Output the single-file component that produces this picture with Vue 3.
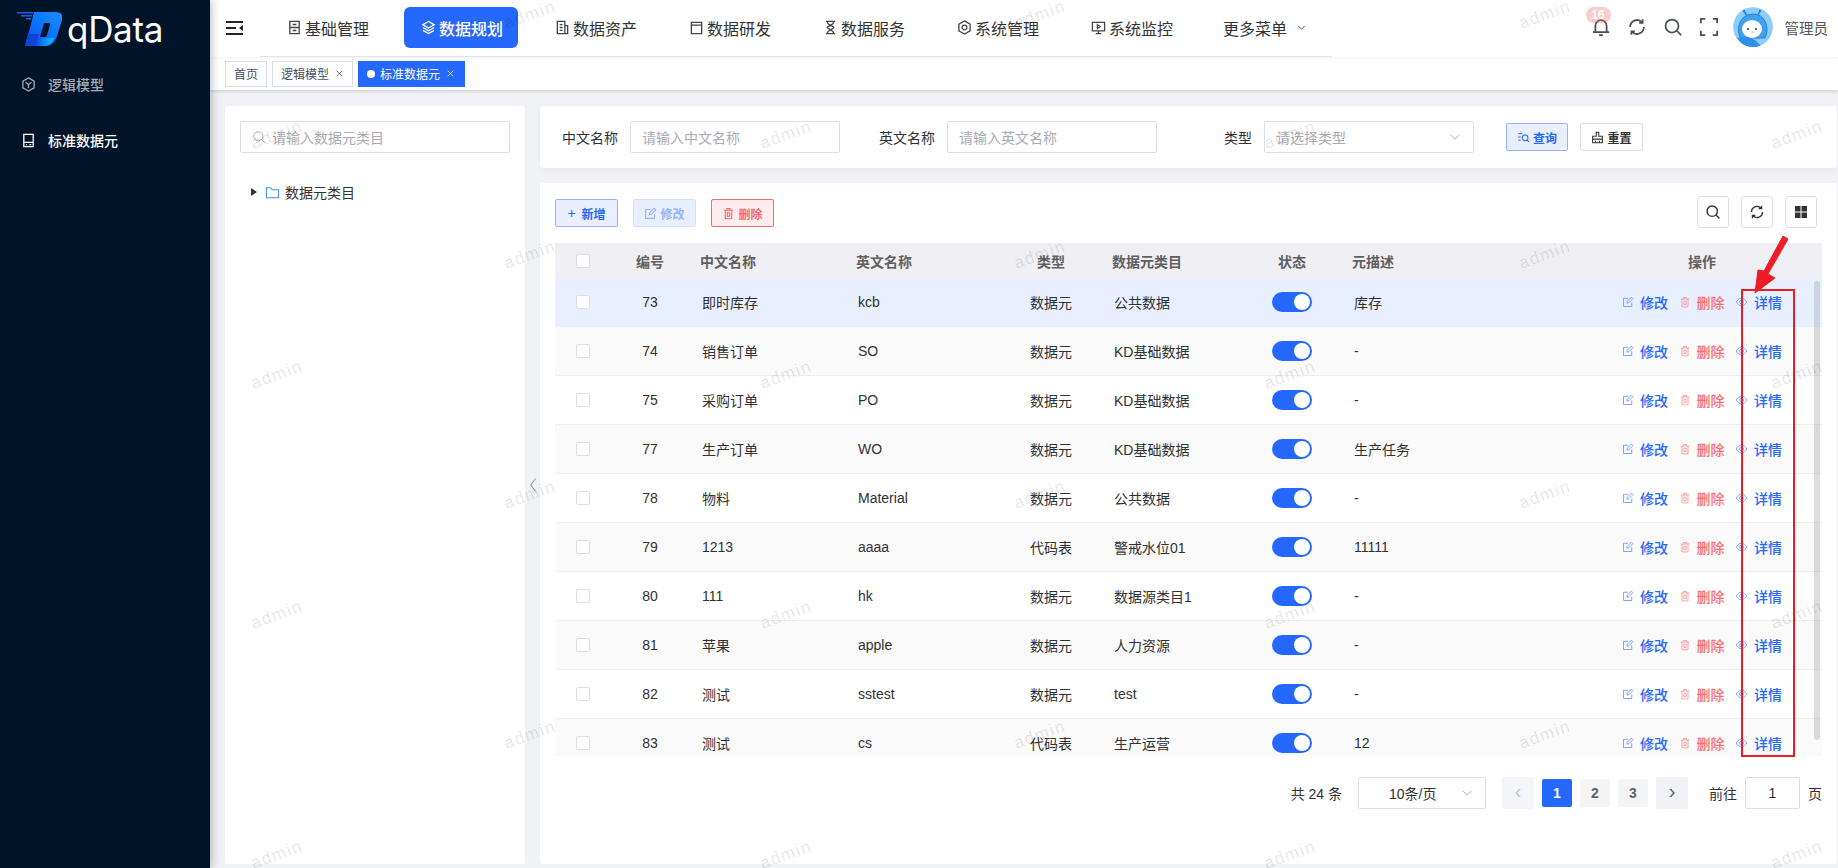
<script setup>
import { computed } from 'vue'

const icons = {
  base: 'M3 1.500h10v13H3zM3 8h10M6 4.800h4M6 11.200h4',
  layers: 'M8 1.500 14 5 8 8.500 2 5zM2 8l6 3.500L14 8M2 11l6 3.500 6-3.500',
  asset: 'M2.500 1.500h8v13h-8zM10.500 6h3v8.500h-3M5 5h3M5 8h3M5 11h3',
  dev: 'M2.500 2.500h11v12h-11zM2.500 2.500h11v3h-11z',
  hourglass: 'M3 1.500h10M3 14.500h10M4.500 1.500c0 4 7 5 7 6.500s-7 2.500-7 6.500M11.500 1.500c0 4-7 5-7 6.500s7 2.500 7 6.500',
  system: 'M8 1 14 4.500v7L8 15l-6-3.500v-7zM8 5.500a2.500 2.500 0 1 0 0 5 2.500 2.500 0 0 0 0-5z',
  monitor: 'M1.500 2.500h13v9h-13zM8 11.500v3M5 14.500h6M6.800 5l3 2-3 2z',
  cube: 'M8 1 14 4.500v7L8 15l-6-3.500v-7zM4.800 5.500 8 8l3.200-2.500M8 8v4',
  disk: 'M3 1.500h10v13H3zM3 10h10M5.500 12.300h1M9 12.300h2',
  search: 'M7.200 2a5.200 5.200 0 1 0 0 10.400A5.200 5.200 0 0 0 7.200 2zM11 11l3.500 3.500',
  refresh: 'M2.500 8a5.500 5.500 0 0 1 9.500-3.800M13.500 8A5.500 5.500 0 0 1 4 11.800M12.500 1.800v2.800H9.700M3.500 14.200v-2.800h2.800',
  edit: 'M13 8.500v5.500H2V3h6M6.500 9.500l.5-2.500 5.500-5.500 2 2L9 9z',
  trash: 'M2.500 4h11M6 4V2h4v2M4 4v10.500h8V4M6.500 7v4.500h3V7z',
  eye: 'M1 8c2-3.500 4.500-5 7-5s5 1.500 7 5c-2 3.500-4.500 5-7 5s-5-1.500-7-5zM8 5.500a2.500 2.500 0 1 0 0 5 2.500 2.500 0 0 0 0-5z',
  query: 'M1.500 3.500h5M1.500 7.500h3M1.500 11.500h3M10 5a3.500 3.500 0 1 0 0 7 3.500 3.500 0 0 0 0-7zM12.500 11l2 2.500',
  brush: 'M6.500 1.500h3v5h4.500v8H2v-8h4.500zM2 10h12M5.500 14.500V12M10.500 14.500V12',
  folder: 'M1.500 3h4.500l1.500 2h7v8.500h-13z',
  chevron: 'M3 5.500 8 10.500 13 5.500',
  bell: 'M3.500 12V7a4.500 4.500 0 0 1 9 0v5M1.500 12h13M6.500 14.500h3',
  full: 'M1.500 5V1.500H5M11 1.500h3.500V5M14.500 11v3.500H11M5 14.500H1.500V11',
  close: 'M3 3l10 10M13 3 3 13',
}

const navItems = [
  { label: '基础管理', icon: 'base' },
  { label: '数据规划', icon: 'layers', active: true },
  { label: '数据资产', icon: 'asset' },
  { label: '数据研发', icon: 'dev' },
  { label: '数据服务', icon: 'hourglass' },
  { label: '系统管理', icon: 'system' },
  { label: '系统监控', icon: 'monitor' },
]

const rows = [
  { id: 73, cn: '即时库存', en: 'kcb', type: '数据元', cat: '公共数据', desc: '库存' },
  { id: 74, cn: '销售订单', en: 'SO', type: '数据元', cat: 'KD基础数据', desc: '-' },
  { id: 75, cn: '采购订单', en: 'PO', type: '数据元', cat: 'KD基础数据', desc: '-' },
  { id: 77, cn: '生产订单', en: 'WO', type: '数据元', cat: 'KD基础数据', desc: '生产任务' },
  { id: 78, cn: '物料', en: 'Material', type: '数据元', cat: '公共数据', desc: '-' },
  { id: 79, cn: '1213', en: 'aaaa', type: '代码表', cat: '警戒水位01', desc: '11111' },
  { id: 80, cn: '111', en: 'hk', type: '数据元', cat: '数据源类目1', desc: '-' },
  { id: 81, cn: '苹果', en: 'apple', type: '数据元', cat: '人力资源', desc: '-' },
  { id: 82, cn: '测试', en: 'sstest', type: '数据元', cat: 'test', desc: '-' },
  { id: 83, cn: '测试', en: 'cs', type: '代码表', cat: '生产运营', desc: '12' },
]

// watermark repeats on a staggered grid
const marks = computed(() => {
  const list = []
  for (let r = 0; r < 8; r++) {
    const xs = r % 2 === 0 ? [530, 1040, 1545] : [277, 786, 1290, 1797]
    xs.forEach((x) => list.push({ x, y: 15 + r * 120 }))
  }
  return list
})
</script>

<template>
  <div class="page">
    <aside class="side">
      <div class="logo">
        <svg class="logo__mark" viewBox="0 0 45 34">
          <defs>
            <linearGradient id="dGrad" x1="0" y1="1" x2="1" y2="0">
              <stop offset="0" stop-color="#1046e8" />
              <stop offset="0.55" stop-color="#0a78ff" />
              <stop offset="1" stop-color="#1f8cff" />
            </linearGradient>
            <linearGradient id="dLow" x1="0" y1="0" x2="1" y2="0">
              <stop offset="0" stop-color="#0a6cf5" />
              <stop offset="1" stop-color="#12c0ff" />
            </linearGradient>
          </defs>
          <path d="M0 0h16v1.500H0zM4 3h11v1.500H4zM9 6h5v1.500H9z" fill="#1a5fe8" />
          <path fill-rule="evenodd" d="M17 0h21q9 0 7 8l-5 16q-3 10-12 10H8L14 12zM27 11l-4 14h5q1.500 0 2-2l3-10q.5-2-1.500-2z" fill="url(#dGrad)" />
          <path d="M11 22h11l-3 12H8z" fill="#0c45d8" />
          <path d="M24 26h13q-3 8-9 8h-6z" fill="url(#dLow)" />
        </svg>
        <span class="logo__text">qData</span>
      </div>
      <div class="menu">
        <svg class="ico ico--menu" viewBox="0 0 16 16"><path :d="icons.cube" /></svg>
        <span>逻辑模型</span>
      </div>
      <div class="menu menu--on">
        <svg class="ico ico--menu" viewBox="0 0 16 16"><path :d="icons.disk" /></svg>
        <span>标准数据元</span>
      </div>
    </aside>

    <div class="main">
      <header class="head">
        <svg class="burger" viewBox="0 0 17 14">
          <path d="M0 1h17M0 7h10M0 13h17" stroke="#222" stroke-width="2" fill="none" />
          <path d="M17 4v6l-4-3z" fill="#222" />
        </svg>
        <nav class="nav">
          <a v-for="n in navItems" :key="n.label" class="nav__item" :class="{ 'nav__item--on': n.active }">
            <svg class="ico" viewBox="0 0 16 16"><path :d="icons[n.icon]" /></svg>
            {{ n.label }}
          </a>
          <a class="nav__item nav__item--more">
            更多菜单
            <svg class="ico ico--more" viewBox="0 0 16 16"><path :d="icons.chevron" /></svg>
          </a>
        </nav>
        <div class="tools">
          <span class="bell">
            <svg class="tool" viewBox="0 0 16 16"><path :d="icons.bell" /></svg>
            <i class="bell__badge">16</i>
          </span>
          <svg class="tool" viewBox="0 0 16 16"><path :d="icons.refresh" /></svg>
          <svg class="tool" viewBox="0 0 16 16"><path :d="icons.search" /></svg>
          <svg class="tool" viewBox="0 0 16 16"><path :d="icons.full" /></svg>
          <svg class="avatar" viewBox="0 0 40 40">
            <circle cx="20" cy="20" r="20" fill="#8accfb" />
            <path d="M14 9 11 4M25 8l2-4" stroke="#2c7fd6" stroke-width="1.500" />
            <circle cx="11" cy="4" r="1.200" fill="#2c7fd6" />
            <circle cx="27" cy="4" r="1.200" fill="#2c7fd6" />
            <path d="M7 31q-4-13 3-20 4-4 10-4 8 0 12 7 4 9 0 17z" fill="#3f9ff0" stroke="#2c7fd6" />
            <ellipse cx="19" cy="22" rx="10" ry="9" fill="#fff" />
            <circle cx="15" cy="22" r="1" fill="#234" />
            <circle cx="23" cy="22" r="1" fill="#234" />
            <path d="M18.500 25h2" stroke="#e88" />
            <path d="M4 31l10-1 8 3 7 7H12z" fill="#2d8fe8" />
          </svg>
          <span class="user">管理员</span>
        </div>
      </header>

      <div class="tabs">
        <span class="tab">首页</span>
        <span class="tab">逻辑模型<svg class="tab__x" viewBox="0 0 16 16"><path :d="icons.close" /></svg></span>
        <span class="tab tab--on"><i class="tab__dot"></i>标准数据元<svg class="tab__x" viewBox="0 0 16 16"><path :d="icons.close" /></svg></span>
      </div>

      <div class="body">
        <section class="tree">
          <div class="field field--tree">
            <svg class="ico ico--field" viewBox="0 0 16 16"><path :d="icons.search" /></svg>
            <span class="ph">请输入数据元类目</span>
          </div>
          <div class="tree__row">
            <i class="caret"></i>
            <svg class="folder" viewBox="0 0 16 16"><path :d="icons.folder" /></svg>
            <span>数据元类目</span>
          </div>
          <svg class="collapse" viewBox="0 0 6 14"><path d="M5.500 .5 .8 7l4.700 6.500" /></svg>
        </section>

        <div class="right">
          <section class="filters">
            <label class="lbl">中文名称</label>
            <div class="field"><span class="ph">请输入中文名称</span></div>
            <label class="lbl lbl--2">英文名称</label>
            <div class="field"><span class="ph">请输入英文名称</span></div>
            <label class="lbl lbl--3">类型</label>
            <div class="field field--select">
              <span class="ph">请选择类型</span>
              <svg class="ico ico--field" viewBox="0 0 16 16"><path :d="icons.chevron" /></svg>
            </div>
            <button class="btn btn--primary btn--query">
              <svg class="ico" viewBox="0 0 16 16"><path :d="icons.query" /></svg>查询
            </button>
            <button class="btn btn--plain">
              <svg class="ico" viewBox="0 0 16 16"><path :d="icons.brush" /></svg>重置
            </button>
          </section>

          <section class="card">
            <div class="bar">
              <button class="btn btn--primary"><span class="plus">+</span>新增</button>
              <button class="btn btn--disabled">
                <svg class="ico" viewBox="0 0 16 16"><path :d="icons.edit" /></svg>修改
              </button>
              <button class="btn btn--danger">
                <svg class="ico" viewBox="0 0 16 16"><path :d="icons.trash" /></svg>删除
              </button>
              <div class="bar__right">
                <span class="square"><svg class="ico" viewBox="0 0 16 16"><path :d="icons.search" /></svg></span>
                <span class="square"><svg class="ico" viewBox="0 0 16 16"><path :d="icons.refresh" /></svg></span>
                <span class="square">
                  <svg class="ico ico--fill" viewBox="0 0 16 16"><path d="M2 2h5.500v5.500H2zM8.500 2H14v5.500H8.500zM2 8.500h5.500V14H2zM8.500 8.500H14V14H8.500z" /></svg>
                </span>
              </div>
            </div>

            <div class="table">
              <div class="row row--head">
                <div class="cell cell--c cell--check"><i class="check"></i></div>
                <div class="cell cell--c">编号</div>
                <div class="cell">中文名称</div>
                <div class="cell">英文名称</div>
                <div class="cell cell--c">类型</div>
                <div class="cell">数据元类目</div>
                <div class="cell cell--c">状态</div>
                <div class="cell">元描述</div>
                <div class="cell cell--c">操作</div>
              </div>
              <div class="rows">
                <div v-for="(r, i) in rows" :key="r.id" class="row" :class="{ 'row--on': i === 0, 'row--alt': i > 0 && i % 2 === 1 }">
                  <div class="cell cell--c cell--check"><i class="check"></i></div>
                  <div class="cell cell--c">{{ r.id }}</div>
                  <div class="cell cell--b">{{ r.cn }}</div>
                  <div class="cell cell--b">{{ r.en }}</div>
                  <div class="cell cell--c">{{ r.type }}</div>
                  <div class="cell cell--b">{{ r.cat }}</div>
                  <div class="cell cell--c"><span class="switch"><i></i></span></div>
                  <div class="cell cell--b">{{ r.desc }}</div>
                  <div class="cell ops">
                    <a class="op"><svg class="ico" viewBox="0 0 16 16"><path :d="icons.edit" /></svg>修改</a>
                    <a class="op op--del"><svg class="ico" viewBox="0 0 16 16"><path :d="icons.trash" /></svg>删除</a>
                    <a class="op"><svg class="ico ico--eye" viewBox="0 0 16 16"><path :d="icons.eye" /></svg>详情</a>
                  </div>
                </div>
              </div>
              <span class="thumb"></span>
            </div>

            <div class="pager">
              <span>共 24 条</span>
              <div class="field field--size">
                <span>10条/页</span>
                <svg class="ico ico--field" viewBox="0 0 16 16"><path :d="icons.chevron" /></svg>
              </div>
              <div class="pager__nums">
                <span class="pg pg--arrow pg--off">‹</span>
                <span class="pg pg--on">1</span>
                <span class="pg">2</span>
                <span class="pg">3</span>
                <span class="pg pg--arrow">›</span>
              </div>
              <span class="pager__go">前往</span>
              <div class="field field--jump">1</div>
              <span>页</span>
            </div>
          </section>
        </div>
      </div>
    </div>

    <span v-for="(m, i) in marks" :key="i" class="mark" :style="{ left: m.x + 'px', top: m.y + 'px' }">admin</span>

    <!-- red annotation on the screenshot -->
    <div class="note-box"></div>
    <svg class="note-arrow" viewBox="0 0 44 68">
      <path d="M33 4 38 7 18 42 25 46 5 61 8 38 14 39z" fill="#ee1c25" stroke="#ee1c25" stroke-linejoin="round" />
    </svg>
  </div>
</template>

<style>
html, body { margin: 0; padding: 0; overflow: hidden; }
</style>

<style scoped>
* { box-sizing: border-box; }
.page {
  position: relative;
  display: flex;
  width: 1838px;
  height: 868px;
  overflow: hidden;
  font-family: "Liberation Sans", "Noto Sans CJK SC", sans-serif;
  font-size: 14px;
  color: #303133;
  background: #f0f2f5;
}
.ico {
  width: 15px;
  height: 15px;
  flex: none;
  fill: none;
  stroke: currentColor;
  stroke-width: 1.400;
}
.ico--fill { fill: #333; stroke: none; }

/* sidebar */
.side {
  position: relative;
  z-index: 3;
  width: 210px;
  flex: none;
  background: #001429;
  box-shadow: 2px 0 8px rgba(0, 21, 41, 0.25);
}
.logo {
  display: flex;
  align-items: flex-start;
  height: 56px;
  padding: 12px 0 0 17px;
}
.logo__mark { width: 45px; height: 34px; flex: none; }
.logo__text {
  margin-left: 5px;
  margin-top: -4px;
  font-family: Inter, sans-serif;
  font-size: 35px;
  line-height: 42px;
  letter-spacing: -0.3px;
  color: #fff;
}
.menu {
  display: flex;
  align-items: center;
  height: 56px;
  padding-left: 21px;
  color: #a4abb4;
  font-weight: 500;
}
.menu--on { color: #fff; }
.ico--menu { width: 15px; height: 15px; margin-right: 12px; }

/* header */
.main { flex: 1; min-width: 0; display: flex; flex-direction: column; }
.head {
  display: flex;
  align-items: flex-start;
  height: 57px;
  background: #fff;
  box-shadow: 0 1px 4px rgba(0, 21, 41, 0.06);
  position: relative;
  z-index: 1;
}
.burger { width: 17px; height: 14px; margin: 21px 0 0 16px; flex: none; }
.nav {
  display: flex;
  gap: 20px;
  width: 1072px;
  height: 57px;
  margin-left: 17px;
  padding: 7px 0 0 10px;
  border-bottom: 1px solid #dfe3ec;
}
.nav__item {
  display: flex;
  align-items: center;
  gap: 3px;
  width: 114px;
  height: 41px;
  padding-left: 17px;
  border-radius: 6px;
  font-size: 16px;
  color: #333;
  white-space: nowrap;
}
.nav__item .ico { color: #444; }
.nav__item--on { background: #2468ff; color: #fff; font-weight: 500; }
.nav__item--on .ico { color: #fff; }
.nav__item--more { width: auto; gap: 9px; padding-left: 15px; }
.ico--more { width: 11px; height: 11px; stroke-width: 1.300; }
.tools {
  display: flex;
  align-items: center;
  gap: 16px;
  height: 54px;
  margin-left: auto;
  padding-right: 10px;
  color: #4a4f57;
}
.tool { width: 20px; height: 20px; fill: none; stroke: #4a4f57; stroke-width: 1.400; flex: none; }
.bell { position: relative; display: block; width: 20px; height: 20px; }
.bell__badge {
  position: absolute;
  left: -5px;
  top: -10px;
  width: 25px;
  height: 16px;
  border-radius: 8px;
  background: rgba(245, 108, 108, 0.35);
  color: #fff;
  font-style: normal;
  font-weight: 700;
  font-size: 12px;
  line-height: 16px;
  text-align: center;
}
.avatar { width: 40px; height: 40px; margin-left: -2px; border-radius: 50%; flex: none; }
.user { margin-left: -4px; font-size: 14.500px; color: #555; }

/* tags */
.tabs {
  display: flex;
  align-items: center;
  gap: 5px;
  height: 33px;
  padding-left: 15px;
  background: #fff;
  box-shadow: 0 2px 3px rgba(0, 21, 41, 0.12);
  position: relative;
}
.tab {
  display: flex;
  align-items: center;
  height: 26px;
  padding: 0 8px;
  border: 1px solid #d8dce5;
  font-size: 12px;
  color: #495060;
  white-space: nowrap;
}
.tab--on { background: #2468ff; border-color: #2468ff; color: #fff; padding: 0 9px 0 8px; }
.tab__dot { width: 8px; height: 8px; margin-right: 5px; border-radius: 50%; background: #fff; }
.tab__x { width: 9px; height: 9px; margin-left: 6px; fill: none; stroke: currentColor; stroke-width: 1.300; }

/* content */
.body { flex: 1; min-height: 0; display: flex; gap: 15px; padding: 16px 1px 4px 15px; }
.tree {
  position: relative;
  width: 300px;
  flex: none;
  padding: 15px;
  background: #fff;
  border-radius: 3px;
}
.field {
  display: flex;
  align-items: center;
  width: 210px;
  height: 32px;
  padding: 0 11px;
  flex: none;
  background: #fff;
  border: 1px solid #dcdfe6;
  border-radius: 2px;
}
.ph { color: #a8abb2; }
.field--tree { width: 270px; gap: 6px; }
.ico--field { color: #a8abb2; width: 14px; height: 14px; stroke-width: 1.100; }
.tree__row {
  display: flex;
  align-items: center;
  height: 24px;
  margin: 27px 0 0 11px;
  color: #333;
}
.caret {
  width: 0;
  height: 0;
  margin-right: 8px;
  border-left: 6px solid #333;
  border-top: 4.500px solid transparent;
  border-bottom: 4.500px solid transparent;
}
.folder { width: 15px; height: 15px; margin-right: 5px; fill: none; stroke: #3f97f0; stroke-width: 1.100; }
.collapse {
  position: absolute;
  left: 305px;
  top: 372px;
  width: 6px;
  height: 14px;
  fill: none;
  stroke: #8a8a8a;
  stroke-width: 1;
}
.right { flex: 1; min-width: 0; display: flex; flex-direction: column; gap: 15px; }
.filters {
  display: flex;
  align-items: center;
  height: 62px;
  padding-left: 22px;
  background: #fff;
  border-radius: 3px;
  box-shadow: 0 2px 6px rgba(0, 21, 41, 0.04);
}
.lbl { margin-right: 12px; color: #303133; white-space: nowrap; }
.lbl--2 { margin-left: 39px; }
.lbl--3 { margin-left: 67px; }
.field--select { justify-content: space-between; }
.btn {
  display: inline-flex;
  align-items: center;
  justify-content: center;
  gap: 3px;
  width: 63px;
  height: 28px;
  padding: 0;
  border: 1px solid #dcdfe6;
  border-radius: 2px;
  background: #fff;
  font-family: inherit;
  font-size: 12px;
  font-weight: 700;
  color: #333;
}
.btn .ico { width: 13px; height: 13px; stroke-width: 1.300; }
.plus { margin-right: 3px; font-weight: 400; font-size: 14px; }
.btn--primary { background: #e9efff; border-color: #92b3ff; color: #2468ff; }
.btn--query { width: 62px; margin-left: 32px; }
.btn--plain { margin-left: 12px; }
.btn--disabled { background: #e9efff; border-color: #d3e0ff; color: #92b3ff; }
.btn--danger { background: #ffeded; border-color: #f56c6c; color: #f56c6c; }

.card {
  flex: 1;
  min-height: 0;
  padding: 13px 15px 0 15px;
  background: #fff;
  border-radius: 3px;
}
.bar { display: flex; align-items: flex-start; gap: 15px; height: 47px; padding-top: 3px; }
.bar__right { display: flex; gap: 12px; margin-left: auto; margin-right: 5px; margin-top: -3px; }
.square {
  display: flex;
  align-items: center;
  justify-content: center;
  width: 32px;
  height: 32px;
  border: 1px solid #dcdfe6;
  border-radius: 3px;
  color: #333;
}
.square .ico { width: 16px; height: 16px; }
.table { position: relative; width: 1267px; }
.row {
  display: grid;
  grid-template-columns: 56px 78px 156px 156px 100px 142px 98px 241px 240px;
  height: 49px;
  background: #fff;
  border-bottom: 1px solid #ebeef5;
  color: #303133;
}
.row--head { height: 35px; background: #f0f0f4; border-bottom: 0; color: #5f5f5f; font-weight: 700; }
.row--on { background: #e8efff; }
.row--alt { background: #fafafa; }
.rows { height: 478px; overflow: hidden; }
.cell {
  display: flex;
  align-items: center;
  padding: 0 11px;
  white-space: nowrap;
}
.cell--c { justify-content: center; }
.cell--b { padding-left: 13px; }
.cell--check { padding: 0; }
.check {
  display: block;
  width: 14px;
  height: 14px;
  flex: none;
  background: #fff;
  border: 1px solid #dcdfe6;
  border-radius: 2px;
}
.switch {
  position: relative;
  display: block;
  width: 40px;
  height: 20px;
  border-radius: 10px;
  background: #2468ff;
}
.switch i {
  position: absolute;
  right: 2px;
  top: 2px;
  width: 16px;
  height: 16px;
  border-radius: 50%;
  background: #fff;
}
.ops { gap: 10.500px; padding-left: 40px; }
.op { display: flex; align-items: center; gap: 6px; color: #2468ff; font-weight: 500; }
.op .ico { width: 12px; height: 12px; stroke-width: 1.200; color: #6f9bff; }
.op--del { color: #fb6e6e; }
.op--del .ico { color: #f89a9a; }
.op .ico--eye { width: 13px; }
.thumb {
  position: absolute;
  right: 2px;
  top: 38px;
  width: 6px;
  height: 459px;
  border-radius: 3px;
  background: rgba(144, 147, 153, 0.3);
}

.pager {
  display: flex;
  align-items: center;
  height: 32px;
  margin-top: 21px;
  justify-content: flex-end;
  color: #303133;
}
.field--size {
  justify-content: space-between;
  width: 128px;
  margin-left: 16px;
  padding: 0 11px 0 30px;
}
.pager__nums { display: flex; align-items: center; gap: 8px; margin-left: 16px; }
.pg {
  width: 30px;
  height: 28px;
  border-radius: 2px;
  background: #f4f4f5;
  color: #606266;
  font-weight: 700;
  line-height: 28px;
  text-align: center;
}
.pg--arrow { width: 32px; height: 32px; line-height: 29px; font-size: 20px; font-weight: 400; background: #f0f2f5; }
.pg--off { color: #c0c4cc; background: #f4f5f9; }
.pg--on { background: #2468ff; color: #fff; }
.pager__go { margin-left: 21px; }
.field--jump { width: 55px; margin: 0 8px 0 8px; justify-content: center; padding: 0; }

/* overlays */
.mark {
  position: absolute;
  z-index: 2;
  transform: translate(-50%, -50%) rotate(-20deg);
  font-size: 17px;
  letter-spacing: 1.500px;
  color: rgba(0, 0, 0, 0.11);
  pointer-events: none;
}
.note-box {
  position: absolute;
  z-index: 4;
  left: 1741px;
  top: 289px;
  width: 54px;
  height: 468px;
  border: 2px solid #ee1c25;
}
.note-arrow {
  position: absolute;
  z-index: 4;
  left: 1750px;
  top: 232px;
  width: 44px;
  height: 68px;
}
</style>
